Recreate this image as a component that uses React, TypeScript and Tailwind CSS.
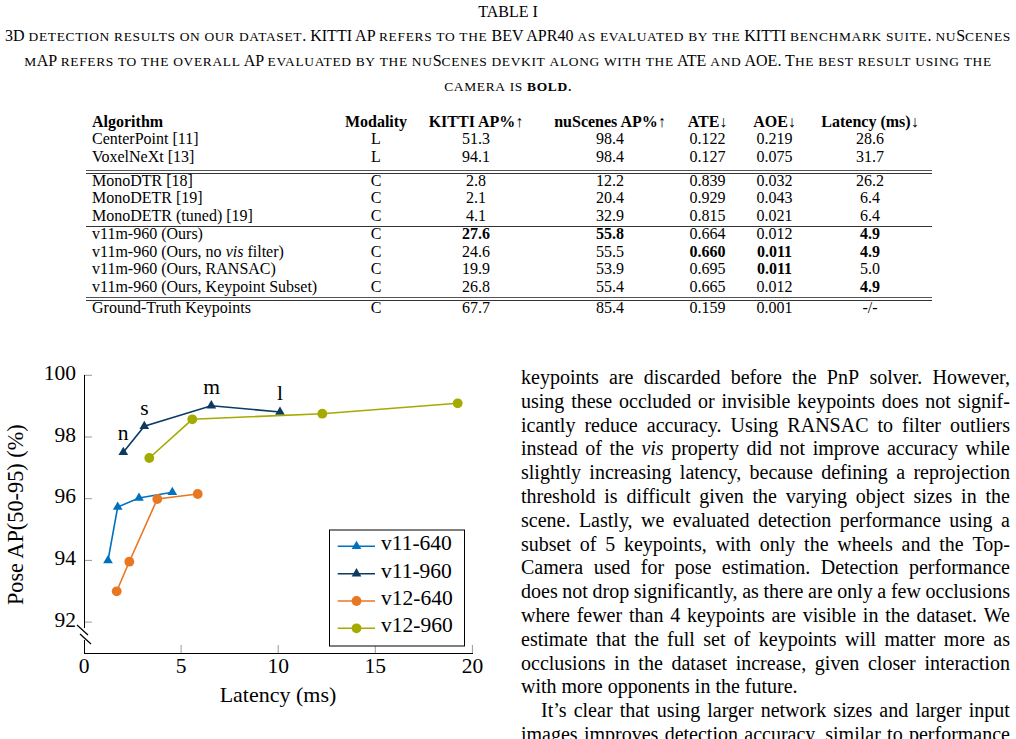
import React, { Fragment } from "react";

function SC({ t }: { t: string }) {
  const parts = t.split(/([a-z]+)/);
  return (
    <>
      {parts.map((p, i) =>
        /^[a-z]+$/.test(p) ? (
          <span key={i} className="text-[0.84em] tracking-[0.05em]">
            {p.toUpperCase()}
          </span>
        ) : (
          <Fragment key={i}>{p}</Fragment>
        )
      )}
    </>
  );
}

type Cell = { v: React.ReactNode; b?: boolean };

const cols = "grid grid-cols-[247px_86px_114px_154px_41px_93px_98px]";

function Row({ cells, header }: { cells: Cell[]; header?: boolean }) {
  return (
    <div className={`${cols} h-[17.5px] leading-[13px] text-[16px] ${header ? "font-bold" : ""}`}>
      {cells.map((c, i) =>
        i === 0 ? (
          <div key={i} className="pl-[6px] whitespace-nowrap">
            {c.v}
          </div>
        ) : (
          <div key={i} className={`flex justify-center whitespace-nowrap ${c.b ? "font-bold" : ""}`}>
            {c.v}
          </div>
        )
      )}
    </div>
  );
}

const Up = () => <span className="font-normal">↑</span>;
const Down = () => <span className="font-normal">↓</span>;

function r(name: React.ReactNode, m: string, vals: (string | [string, boolean])[]): Cell[] {
  return [
    { v: name },
    { v: m },
    ...vals.map((x) => (typeof x === "string" ? { v: x } : { v: x[0], b: x[1] })),
  ];
}

const group1 = [
  r("CenterPoint [11]", "L", ["51.3", "98.4", "0.122", "0.219", "28.6"]),
  r("VoxelNeXt [13]", "L", ["94.1", "98.4", "0.127", "0.075", "31.7"]),
];
const group2 = [
  r("MonoDTR [18]", "C", ["2.8", "12.2", "0.839", "0.032", "26.2"]),
  r("MonoDETR [19]", "C", ["2.1", "20.4", "0.929", "0.043", "6.4"]),
  r("MonoDETR (tuned) [19]", "C", ["4.1", "32.9", "0.815", "0.021", "6.4"]),
];
const group3 = [
  r("v11m-960 (Ours)", "C", [["27.6", true], ["55.8", true], "0.664", "0.012", ["4.9", true]]),
  r(
    <>
      v11m-960 (Ours, no <i>vis</i> filter)
    </>,
    "C",
    ["24.6", "55.5", ["0.660", true], ["0.011", true], ["4.9", true]]
  ),
  r("v11m-960 (Ours, RANSAC)", "C", ["19.9", "53.9", "0.695", ["0.011", true], "5.0"]),
  r("v11m-960 (Ours, Keypoint Subset)", "C", ["26.8", "55.4", "0.665", "0.012", ["4.9", true]]),
];
const gt = r("Ground-Truth Keypoints", "C", ["67.7", "85.4", "0.159", "0.001", "-/-"]);

const Rule = () => <div className="h-px bg-[#333]" />;
const DoubleRule = () => (
  <div className="flex flex-col gap-[1.5px]">
    <div className="h-px bg-[#555]" />
    <div className="h-px bg-[#333]" />
  </div>
);

type Pt = [number, number];
const series: { name: string; color: string; mark: "tri" | "circ"; pts: Pt[] }[] = [
  { name: "v11-640", color: "#0072BD", mark: "tri", pts: [[108, 557.5], [117.7, 504], [139, 495], [172.3, 489.3]] },
  { name: "v11-960", color: "#0b3a63", mark: "tri", pts: [[123.3, 449.3], [144.3, 423.3], [211.3, 402.7], [280, 409]] },
  { name: "v12-640", color: "#E87722", mark: "circ", pts: [[116.7, 588.3], [129.3, 558.7], [157.3, 496], [197.7, 491]] },
  { name: "v12-960", color: "#A5AA00", mark: "circ", pts: [[149.3, 455], [192.3, 416.3], [322.3, 410.7], [457.7, 400.3]] },
];

function Mark({ x, y, kind, color }: { x: number; y: number; kind: "tri" | "circ"; color: string }) {
  if (kind === "circ") return <circle cx={x} cy={y} r={4.9} fill={color} />;
  const R = 5.6;
  return (
    <polygon
      points={`${x},${y - R} ${x + R * 0.866},${y + R * 0.5} ${x - R * 0.866},${y + R * 0.5}`}
      fill={color}
    />
  );
}

function Chart() {
  const yTicks: [string, number][] = [
    ["100", 372.3],
    ["98", 434],
    ["96", 495.7],
    ["94", 557.4],
    ["92", 619.1],
  ];
  const xTicks: [string, number][] = [
    ["0", 84],
    ["5", 181.1],
    ["10", 278.2],
    ["15", 375.3],
    ["20", 472.4],
  ];
  const legendY = [543.3, 570.7, 598, 625.3];
  return (
    <svg width={510} height={384} viewBox="0 355 510 384" fontFamily="'Liberation Serif', serif" fontSize={21.5}>
      {yTicks.map(([, y], i) => (
        <line key={i} x1={84} x2={92} y1={y} y2={y} stroke="#999" strokeWidth={1} />
      ))}
      {xTicks.slice(1).map(([, x], i) => (
        <line key={i} x1={x} x2={x} y1={650} y2={642} stroke="#999" strokeWidth={1} />
      ))}
      <line x1={84.5} x2={84.5} y1={372} y2={625} stroke="#000" strokeWidth={1} />
      <line x1={84.5} x2={84.5} y1={637} y2={651} stroke="#000" strokeWidth={1} />
      <line x1={84} x2={473} y1={650.5} y2={650.5} stroke="#000" strokeWidth={1} />
      <line x1={77} y1={622} x2={88} y2={632} stroke="#000" strokeWidth={1.2} />
      <line x1={80} y1={631} x2={91} y2={641} stroke="#000" strokeWidth={1.2} />
      {yTicks.map(([t, y], i) => (
        <text key={i} x={76} y={y + 4.5} textAnchor="end">
          {t}
        </text>
      ))}
      {xTicks.map(([t, x], i) => (
        <text key={i} x={x} y={670} textAnchor="middle">
          {t}
        </text>
      ))}
      <text x={278} y={699} textAnchor="middle" fontSize={22}>
        Latency (ms)
      </text>
      <text x={23} y={511.7} textAnchor="middle" fontSize={22.3} transform="rotate(-90 23 511.7)">
        Pose AP(50-95) (%)
      </text>
      {series.map((s) => (
        <g key={s.name}>
          <polyline points={s.pts.map((p) => p.join(",")).join(" ")} fill="none" stroke={s.color} strokeWidth={1.6} />
          {s.pts.map((p, i) => (
            <Mark key={i} x={p[0]} y={p[1]} kind={s.mark} color={s.color} />
          ))}
        </g>
      ))}
      <text x={123} y={437} textAnchor="middle">n</text>
      <text x={144.5} y={412} textAnchor="middle">s</text>
      <text x={211.5} y={390.5} textAnchor="middle">m</text>
      <text x={280} y={397} textAnchor="middle">l</text>
      <rect x={329.5} y={527} width={135} height={116} fill="#fff" stroke="#000" strokeWidth={1} />
      {series.map((s, i) => (
        <g key={s.name}>
          <line x1={337.7} x2={375} y1={legendY[i]} y2={legendY[i]} stroke={s.color} strokeWidth={1.6} />
          <Mark x={356.5} y={legendY[i]} kind={s.mark} color={s.color} />
          <text x={381} y={legendY[i] + 3.8}>
            {s.name}
          </text>
        </g>
      ))}
    </svg>
  );
}

const lines: React.ReactNode[][] = [
  "keypoints are discarded before the PnP solver. However,".split(" "),
  "using these occluded or invisible keypoints does not signif-".split(" "),
  "icantly reduce accuracy. Using RANSAC to filter outliers".split(" "),
  ["instead", "of", "the", <i key="v">vis</i>, "property", "did", "not", "improve", "accuracy", "while"],
  "slightly increasing latency, because defining a reprojection".split(" "),
  "threshold is difficult given the varying object sizes in the".split(" "),
  "scene. Lastly, we evaluated detection performance using a".split(" "),
  "subset of 5 keypoints, with only the wheels and the Top-".split(" "),
  "Camera used for pose estimation. Detection performance".split(" "),
  "does not drop significantly, as there are only a few occlusions".split(" "),
  "where fewer than 4 keypoints are visible in the dataset. We".split(" "),
  "estimate that the full set of keypoints will matter more as".split(" "),
  "occlusions in the dataset increase, given closer interaction".split(" "),
];

function JLine({ words, indent }: { words: React.ReactNode[]; indent?: boolean }) {
  return (
    <div className={`flex justify-between whitespace-nowrap ${indent ? "pl-[20px]" : ""}`}>
      {words.map((w, i) => (
        <span key={i}>{w}</span>
      ))}
    </div>
  );
}

export default function App() {
  return (
    <div className="w-[1016px] h-[739px] overflow-hidden bg-white text-black font-['Liberation_Serif',serif]">
      <div className="text-center text-[16px] leading-[24px]">
        <div>TABLE I</div>
        <div className="whitespace-nowrap">
          <SC t="3D detection results on our dataset. KITTI AP refers to the BEV APR40 as evaluated by the KITTI benchmark suite. nuScenes" />
        </div>
        <div className="whitespace-nowrap">
          <SC t="mAP refers to the overall AP evaluated by the nuScenes devkit along with the ATE and AOE. The best result using the" />
        </div>
        <div className="whitespace-nowrap">
          <SC t="camera is " />
          <b>
            <SC t="bold" />
          </b>
          .
        </div>
      </div>

      <div className="ml-[86px] w-[846px] mt-[15.5px]">
        <Row
          header
          cells={[
            { v: "Algorithm" },
            { v: "Modality" },
            { v: <>KITTI AP%<Up /></> },
            { v: <>nuScenes AP%<Up /></> },
            { v: <>ATE<Down /></> },
            { v: <>AOE<Down /></> },
            { v: <>Latency (ms)<Down /></> },
          ]}
        />
        {group1.map((c, i) => (
          <Row key={i} cells={c} />
        ))}
        <div className="h-[3px]" />
        <DoubleRule />
        {group2.map((c, i) => (
          <Row key={i} cells={c} />
        ))}
        <Rule />
        {group3.map((c, i) => (
          <Row key={i} cells={c} />
        ))}
        <DoubleRule />
        <Row cells={gt} />
      </div>

      <div className="flex mt-[40px]">
        <div className="w-[510px] shrink-0">
          <Chart />
        </div>
        <div className="w-[489px] ml-[11px] pt-[8px] text-[20px] leading-[23.8px]">
          {lines.map((w, i) => (
            <JLine key={i} words={w} />
          ))}
          <div className="whitespace-nowrap">with more opponents in the future.</div>
          <JLine indent words={"It’s clear that using larger network sizes and larger input".split(" ")} />
          <JLine words={"images improves detection accuracy, similar to performance".split(" ")} />
        </div>
      </div>
    </div>
  );
}
